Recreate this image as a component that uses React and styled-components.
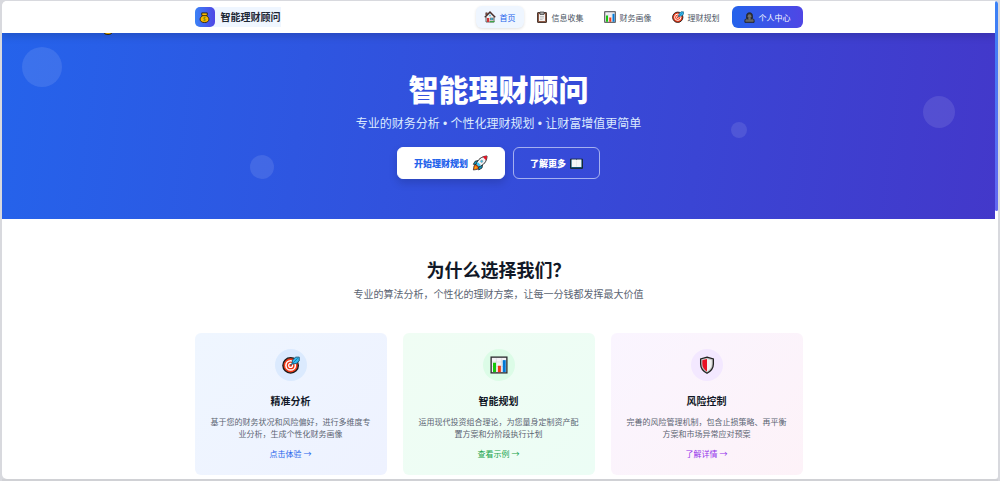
import React from 'react';
import styled, { createGlobalStyle } from 'styled-components';

const GlobalStyle = createGlobalStyle`
  * {
    box-sizing: border-box;
  }
  body {
    margin: 0;
    background-color: #d8d9de;
    font-family: 'Noto Sans CJK SC', 'Liberation Sans', sans-serif;
    color: #111827;
  }
  h1, h2, h3, p, ul {
    margin: 0;
    padding: 0;
  }
  a {
    text-decoration: none;
    color: inherit;
  }
`;

const Window = styled.div`
  display: flex;
  margin: 0 2px;
  border-top: 1px solid #d8d9de;
  border-bottom: 2px solid #d0d1d5;
  min-height: 100vh;
`;

const Page = styled.div`
  flex: 1;
  min-width: 0;
  background-color: white;
  border-radius: 5px 0 0 5px;
  overflow: hidden;
`;

const ScrollTrack = styled.div`
  width: 3px;
  background-color: white;
  border-radius: 0 5px 5px 0;
  overflow: hidden;
`;

const ScrollThumb = styled.div`
  height: 44%;
  border-radius: 2px;
  background: linear-gradient(#3b82f6, #6366f1);
`;

const Container = styled.div`
  max-width: 608px;
  margin: 0 auto;
`;

const Header = styled.header`
  position: relative;
  z-index: 2;
  background-color: white;
  box-shadow: 0 3px 8px rgba(0, 0, 0, 0.16);
`;

const HeaderRow = styled(Container)`
  height: 32px;
  display: flex;
  align-items: center;
  justify-content: space-between;
`;

const Brand = styled.a`
  display: flex;
  align-items: center;
  background-color: #eff6ff;
  border-radius: 5px 0 0 5px;
`;

const BrandMark = styled.span`
  width: 20px;
  height: 20px;
  display: flex;
  align-items: center;
  justify-content: center;
  border-radius: 5px;
  background: linear-gradient(90deg, #3b82f6, #4f46e5);
`;

const BrandName = styled.span`
  padding-left: 6px;
  font-size: 10px;
  line-height: 20px;
  font-weight: 700;
  color: #1f2937;
`;

const Nav = styled.nav`
  display: flex;
  align-items: center;
  gap: 4px;
`;

const NavLink = styled.a`
  display: flex;
  align-items: center;
  gap: 4px;
  height: 22px;
  padding: 0 8px;
  border-radius: 6px;
  font-size: 8px;
  color: ${({ $active }) => ($active ? '#2563eb' : '#4b5563')};
  background-color: ${({ $active }) => ($active ? '#eff6ff' : 'transparent')};
  box-shadow: ${({ $active }) =>
    $active ? '0 1px 3px rgba(0, 0, 0, 0.12)' : 'none'};
`;

const ProfileButton = styled.button`
  display: flex;
  align-items: center;
  gap: 4px;
  height: 22px;
  padding: 0 12px;
  border: none;
  border-radius: 6px;
  font-family: inherit;
  font-size: 8px;
  color: white;
  background: linear-gradient(90deg, #2563eb, #4f46e5);
  cursor: pointer;
`;

const Hero = styled.section`
  position: relative;
  padding: 40px 0;
  text-align: center;
  color: white;
  background: linear-gradient(97deg, #2563eb, #4338ca);
`;

const Bubble = styled.span`
  position: absolute;
  top: ${({ $top }) => $top};
  left: ${({ $left }) => $left};
  width: ${({ $size }) => $size}px;
  height: ${({ $size }) => $size}px;
  border-radius: 50%;
  background-color: rgba(255, 255, 255, 0.1);
`;

const FloatingCoin = styled.span`
  position: absolute;
  top: -10px;
  left: 100px;
  display: flex;
`;

const HeroTitle = styled.h1`
  font-size: 30px;
  line-height: 30px;
  font-weight: 900;
`;

const HeroText = styled.p`
  margin-top: 10px;
  font-family: 'Liberation Sans', 'Noto Sans CJK SC', sans-serif;
  font-size: 12px;
  line-height: 22px;
  color: #dbeafe;
`;

const HeroActions = styled.div`
  display: flex;
  justify-content: center;
  gap: 8px;
  margin-top: 12px;
`;

const HeroButton = styled.button`
  display: flex;
  align-items: center;
  gap: 4px;
  height: 32px;
  padding: 0 16px;
  border: 1px solid ${({ $solid }) => ($solid ? 'white' : '#a5b0f0')};
  border-radius: 6px;
  font-family: inherit;
  font-size: 9px;
  font-weight: 900;
  color: ${({ $solid }) => ($solid ? '#2563eb' : 'white')};
  background-color: ${({ $solid }) => ($solid ? 'white' : 'transparent')};
  box-shadow: ${({ $solid }) =>
    $solid ? '0 4px 8px rgba(0, 0, 0, 0.15)' : 'none'};
  cursor: pointer;
`;

const Features = styled.section`
  padding: 40px 0 4px;
  text-align: center;
`;

const SectionTitle = styled.h2`
  font-size: 18px;
  line-height: 20px;
  font-weight: 700;
`;

const SectionText = styled.p`
  margin-top: 6px;
  font-size: 10px;
  line-height: 18px;
  color: #5b6472;
`;

const CardGrid = styled(Container)`
  display: grid;
  grid-template-columns: repeat(3, 1fr);
  gap: 16px;
  margin-top: 30px;
`;

const Card = styled.article`
  display: flex;
  flex-direction: column;
  align-items: center;
  padding: 16px 16px 15px;
  border-radius: 6px;
  background: linear-gradient(
    135deg,
    ${({ $from }) => $from},
    ${({ $to }) => $to}
  );
`;

const CardIcon = styled.div`
  width: 32px;
  height: 32px;
  display: flex;
  align-items: center;
  justify-content: center;
  border-radius: 50%;
  background-color: ${({ $color }) => $color};
`;

const CardTitle = styled.h3`
  margin-top: 12px;
  font-size: 10px;
  line-height: 15px;
  font-weight: 700;
`;

const CardText = styled.p`
  margin-top: 8px;
  font-size: 8px;
  line-height: 12px;
  color: #5b6472;
`;

const CardLink = styled.a`
  margin-top: 8px;
  font-size: 8px;
  line-height: 12px;
  color: ${({ $color }) => $color};
`;

const Icon = ({ size, children }) => (
  <svg width={size} height={size} viewBox="0 0 24 24" aria-hidden="true">
    {children}
  </svg>
);

const MoneyBag = ({ size }) => (
  <Icon size={size}>
    <path
      d="M6 2h12v5l-1.500 1.500C20 10.500 21.500 13 21.500 16c0 4.500-4 7-9.500 7s-9.500-2.500-9.500-7c0-3 1.500-5.500 5-7.500L6 7z"
      fill="#fdb900"
      stroke="#2b2410"
      strokeWidth="2"
    />
    <path d="M7 8h10" stroke="#2b2410" strokeWidth="2" />
    <path
      d="M15 12.500c-1-1-5.500-1.200-5.500 1 0 2.200 5.500 1.300 5.500 3.500s-4.500 2-6 .8M12 11v9"
      fill="none"
      stroke="#6d8a16"
      strokeWidth="1.400"
    />
  </Icon>
);

const House = ({ size }) => (
  <Icon size={size}>
    <path d="M4 11l8-8 8 8v11H4z" fill="#f1eeee" stroke="#333" strokeWidth="1.500" />
    <path d="M3.500 8V3.500h3v3z" fill="#b3543f" stroke="#333" />
    <path d="M1.500 12.500L12 2l10.500 10.500" fill="none" stroke="#4a2d2a" strokeWidth="2.500" />
    <rect x="6" y="14" width="4.500" height="8" fill="#d13438" />
    <rect x="13" y="14" width="5" height="4" fill="#3cc4ed" stroke="#555" />
    <circle cx="12" cy="9" r="1.800" fill="#55b8df" />
    <path d="M12 20h9v2.500h-9z" fill="#3fa648" />
  </Icon>
);

const Clipboard = ({ size }) => (
  <Icon size={size}>
    <rect x="3" y="3" width="18" height="20" rx="1" fill="#8e5a45" stroke="#4c3a33" strokeWidth="2" />
    <rect x="6" y="6" width="12" height="14" fill="#f3f3f3" />
    <path d="M8 2h8v5H8z" fill="#a5a5a5" stroke="#444" strokeWidth="1.500" />
    <path d="M8 11h8M8 14h8M8 17h5" stroke="#a5a5a5" strokeWidth="1.200" />
  </Icon>
);

const BarChart = ({ size }) => (
  <Icon size={size}>
    <rect x="1.500" y="1.500" width="21" height="21" fill="#f3f2f5" stroke="#2f2f33" strokeWidth="1.800" />
    <path d="M8.500 3v18M15.500 3v18M3 8h18M3 14h18" stroke="#d4d4dc" strokeWidth="0.800" />
    <rect x="4" y="9" width="4" height="12.500" fill="#16c60c" />
    <rect x="10.500" y="13" width="4" height="8.500" fill="#f03a17" />
    <rect x="17" y="5.500" width="4" height="16" fill="#0078d7" />
  </Icon>
);

const Target = ({ size }) => (
  <Icon size={size}>
    <circle cx="11.500" cy="12.500" r="10.300" fill="#f03a17" stroke="#1d1d1d" strokeWidth="1.800" />
    <circle cx="11.500" cy="12.500" r="6.300" fill="#f03a17" stroke="white" strokeWidth="2" />
    <circle cx="11.500" cy="12.500" r="2.600" fill="#f03a17" stroke="white" strokeWidth="1.600" />
    <path d="M11.500 12.500L16 8" stroke="#245d78" strokeWidth="1.600" />
    <path
      d="M13.500 10.500l.5-5L18 1.500h5v5L19 10z"
      fill="#31b8f0"
      stroke="#155a7a"
      strokeWidth="1.200"
    />
    <path d="M15 9l6-6" stroke="#155a7a" strokeWidth="0.800" />
  </Icon>
);

const Person = ({ size }) => (
  <Icon size={size}>
    <path
      d="M2 22.500v-4c0-2.500 2-4 5.500-4h9c3.500 0 5.500 1.500 5.500 4v4z"
      fill="#666"
      stroke="#222"
      strokeWidth="2"
    />
    <path
      d="M5.500 13V8c0-4 2.500-6.500 6.500-6.500S18.500 4 18.500 8v5l-3 2.500h-7z"
      fill="#333"
      stroke="#222"
      strokeWidth="1.500"
    />
    <circle cx="12" cy="9" r="4" fill="#707070" />
    <path d="M9.500 13h5v4h-5z" fill="#707070" />
  </Icon>
);

const Rocket = ({ size }) => (
  <Icon size={size}>
    <path d="M2 22.500l1-6.500 3-2 4.500 4.500-2 3z" fill="#f7630c" stroke="#222" />
    <path d="M3.500 21l1.500-4 2.500 2z" fill="#fcb900" />
    <path
      d="M10 8l-5.500 1.500L2 14l5 .5zM16 14l-1 5.500L10 22.500v-5z"
      fill="#0a9cc9"
      stroke="#222"
      strokeWidth="1.200"
    />
    <path
      d="M6 14C8.500 7 14 2 22.500 1.500 22.500 10 17 15.500 10 18z"
      fill="#f0f2f4"
      stroke="#222"
      strokeWidth="1.400"
    />
    <path d="M16 2.800c2-.8 4-1.300 6.500-1.300 0 2.500-.5 4.800-1.500 6.500z" fill="#e81224" />
    <circle cx="14.500" cy="9.500" r="1.700" fill="#31c4f3" stroke="#777" strokeWidth="0.700" />
    <path d="M7 14l1.500-3.500 5 5L10 17z" fill="#31c4f3" />
  </Icon>
);

const Book = ({ size }) => (
  <Icon size={size}>
    <path d="M1 4h22v17H1z" fill="#155a7a" stroke="#182530" strokeWidth="1.800" />
    <path d="M3 4.500h8L12 5.500l1-1h8v14H3z" fill="#f5f5f5" />
    <path d="M12 6v12" stroke="#d5d9de" strokeWidth="0.800" />
  </Icon>
);

const Shield = ({ size }) => (
  <Icon size={size}>
    <path
      d="M12 1.500l8.500 2.500v6.500c0 5-3.200 9.500-8.500 12.500-5.300-3-8.500-7.500-8.500-12.500V4z"
      fill="#c6c6c6"
      stroke="#222"
      strokeWidth="1.700"
    />
    <path d="M12 4v16.500c-4-2.500-6.200-6-6.200-10V5.800z" fill="#e81224" />
    <path d="M12 4v16.500c4-2.500 6.200-6 6.200-10V5.800z" fill="#f2f2f2" />
  </Icon>
);

const navItems = [
  { label: '首页', icon: House, active: true },
  { label: '信息收集', icon: Clipboard },
  { label: '财务画像', icon: BarChart },
  { label: '理财规划', icon: Target },
];

const bubbles = [
  { top: '14px', left: '2%', size: 40 },
  { top: '63px', left: 'calc(100% - 72px)', size: 32 },
  { top: '122px', left: '25%', size: 24 },
  { top: '89px', left: 'calc(75% - 16px)', size: 16 },
];

const features = [
  {
    title: '精准分析',
    text: '基于您的财务状况和风险偏好，进行多维度专业分析，生成个性化财务画像',
    link: '点击体验 →',
    icon: Target,
    from: '#eff6ff',
    to: '#eef2ff',
    circle: '#dbeafe',
    color: '#2563eb',
  },
  {
    title: '智能规划',
    text: '运用现代投资组合理论，为您量身定制资产配置方案和分阶段执行计划',
    link: '查看示例 →',
    icon: BarChart,
    from: '#f0fdf4',
    to: '#ecfdf5',
    circle: '#dcfce7',
    color: '#16a34a',
  },
  {
    title: '风险控制',
    text: '完善的风险管理机制，包含止损策略、再平衡方案和市场异常应对预案',
    link: '了解详情 →',
    icon: Shield,
    from: '#faf5ff',
    to: '#fdf2f8',
    circle: '#f3e8ff',
    color: '#9333ea',
  },
];

const App = () => {
  return (
    <>
      <GlobalStyle />
      <Window>
        <Page>
          <Header>
            <HeaderRow>
              <Brand href="#">
                <BrandMark>
                  <MoneyBag size={11} />
                </BrandMark>
                <BrandName>智能理财顾问</BrandName>
              </Brand>
              <Nav>
                {navItems.map(({ label, icon: NavIcon, active }) => (
                  <NavLink key={label} href="#" $active={active}>
                    <NavIcon size={12} />
                    {label}
                  </NavLink>
                ))}
                <ProfileButton type="button">
                  <Person size={11} />
                  个人中心
                </ProfileButton>
              </Nav>
            </HeaderRow>
          </Header>
          <Hero>
            <FloatingCoin>
              <MoneyBag size={12} />
            </FloatingCoin>
            {bubbles.map(({ top, left, size }) => (
              <Bubble key={size} $top={top} $left={left} $size={size} />
            ))}
            <HeroTitle>智能理财顾问</HeroTitle>
            <HeroText>专业的财务分析 • 个性化理财规划 • 让财富增值更简单</HeroText>
            <HeroActions>
              <HeroButton type="button" $solid>
                开始理财规划
                <Rocket size={16} />
              </HeroButton>
              <HeroButton type="button">
                了解更多
                <Book size={13} />
              </HeroButton>
            </HeroActions>
          </Hero>
          <Features>
            <SectionTitle>为什么选择我们？</SectionTitle>
            <SectionText>
              专业的算法分析，个性化的理财方案，让每一分钱都发挥最大价值
            </SectionText>
            <CardGrid>
              {features.map(({ icon: FeatureIcon, ...item }) => (
                <Card key={item.title} $from={item.from} $to={item.to}>
                  <CardIcon $color={item.circle}>
                    <FeatureIcon size={18} />
                  </CardIcon>
                  <CardTitle>{item.title}</CardTitle>
                  <CardText>{item.text}</CardText>
                  <CardLink href="#" $color={item.color}>
                    {item.link}
                  </CardLink>
                </Card>
              ))}
            </CardGrid>
          </Features>
        </Page>
        <ScrollTrack>
          <ScrollThumb />
        </ScrollTrack>
      </Window>
    </>
  );
};

export default App;
